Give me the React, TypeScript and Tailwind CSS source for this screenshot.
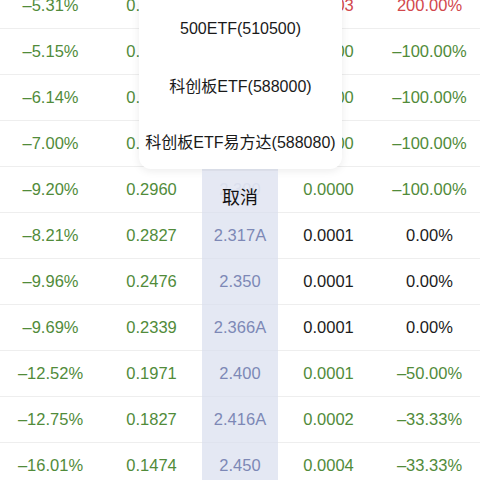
const GREEN = "text-[#518b3a]";
const RED = "text-[#d2484d]";
const BLACK = "text-[#1c1c1c]";

type Row = {
    chg: string;
    price: string;
    strike: string;
    last: string;
    lastColor: string;
    pct: string;
    pctColor: string;
};

const rows: Row[] = [
    {chg: "–5.31%", price: "0.3481", strike: "2.200", last: "0.0003", lastColor: RED, pct: "200.00%", pctColor: RED},
    {chg: "–5.15%", price: "0.3336", strike: "2.216A", last: "0.0000", lastColor: GREEN, pct: "–100.00%", pctColor: GREEN},
    {chg: "–6.14%", price: "0.3207", strike: "2.250", last: "0.0000", lastColor: GREEN, pct: "–100.00%", pctColor: GREEN},
    {chg: "–7.00%", price: "0.3094", strike: "2.266A", last: "0.0000", lastColor: GREEN, pct: "–100.00%", pctColor: GREEN},
    {chg: "–9.20%", price: "0.2960", strike: "2.300", last: "0.0000", lastColor: GREEN, pct: "–100.00%", pctColor: GREEN},
    {chg: "–8.21%", price: "0.2827", strike: "2.317A", last: "0.0001", lastColor: BLACK, pct: "0.00%", pctColor: BLACK},
    {chg: "–9.96%", price: "0.2476", strike: "2.350", last: "0.0001", lastColor: BLACK, pct: "0.00%", pctColor: BLACK},
    {chg: "–9.69%", price: "0.2339", strike: "2.366A", last: "0.0001", lastColor: BLACK, pct: "0.00%", pctColor: BLACK},
    {chg: "–12.52%", price: "0.1971", strike: "2.400", last: "0.0001", lastColor: GREEN, pct: "–50.00%", pctColor: GREEN},
    {chg: "–12.75%", price: "0.1827", strike: "2.416A", last: "0.0002", lastColor: GREEN, pct: "–33.33%", pctColor: GREEN},
    {chg: "–16.01%", price: "0.1474", strike: "2.450", last: "0.0004", lastColor: GREEN, pct: "–33.33%", pctColor: GREEN},
];

const options = ["500ETF(510500)", "科创板ETF(588000)", "科创板ETF易方达(588080)"];

export default function App() {
    return (
        <main
            className="relative w-[480px] h-[480px] overflow-hidden bg-white"
            style={{fontFamily: '"Liberation Sans", "Noto Sans CJK SC", sans-serif'}}
        >
            <div className="-mt-[17px] grid grid-cols-[101px_101px_76px_101px_101px] text-[16.5px]">
                {rows.map((r, i) => (
                    <div key={i} className="contents">
                        <div className={`h-[46px] flex items-center justify-center border-b border-[#eeeeee] ${GREEN}`}>
                            {r.chg}
                        </div>
                        <div className={`h-[46px] flex items-center justify-center border-b border-[#eeeeee] ${GREEN}`}>
                            {r.price}
                        </div>
                        <div className="h-[46px] flex items-center justify-center bg-[#e4e8f3] border-b border-[#dfe3ee] text-[#7d88b6]">
                            {r.strike}
                        </div>
                        <div className={`h-[46px] flex items-center justify-center border-b border-[#eeeeee] ${r.lastColor}`}>
                            {r.last}
                        </div>
                        <div className={`h-[46px] flex items-center justify-center border-b border-[#eeeeee] ${r.pctColor}`}>
                            {r.pct}
                        </div>
                    </div>
                ))}
            </div>

            {/* action sheet */}
            <div className="absolute left-[139px] top-0 w-[203px] h-[169px] bg-white rounded-b-xl shadow-[0_2px_8px_rgba(0,0,0,0.08)] flex flex-col text-[16px] text-[#1a1a1a]">
                {options.map((o, i) => (
                    <div key={o} className={`flex items-center justify-center ${i === 2 ? "h-[53px]" : "h-[58px]"}`}>
                        {o}
                    </div>
                ))}
            </div>
            <div className="absolute left-[202px] top-[171px] w-[76px] h-[41px] bg-[#e4e8f3]/90 flex items-center justify-center pt-[13px] text-[18px] text-[#111111]">
                取消
            </div>
        </main>
    );
}
